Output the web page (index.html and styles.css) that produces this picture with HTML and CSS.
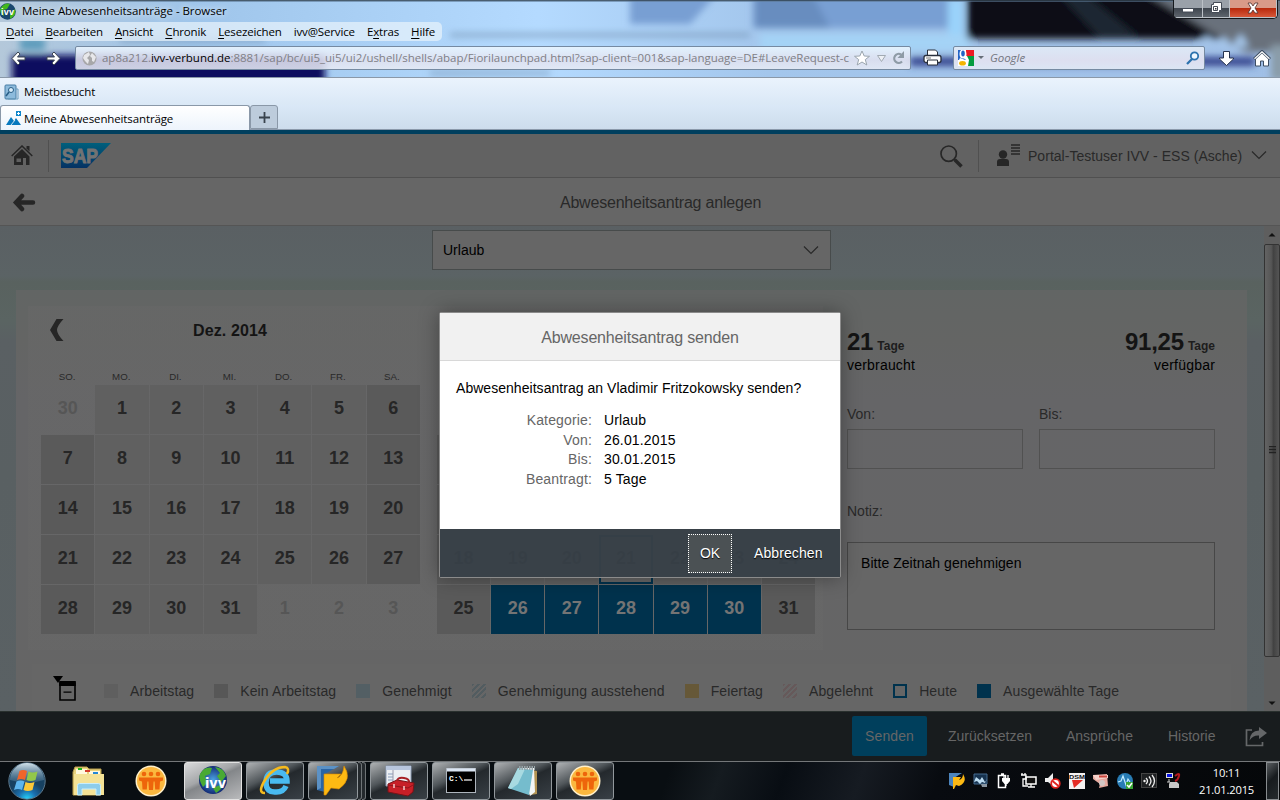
FILE: index.html
```html
<!DOCTYPE html>
<html lang="de">
<head>
<meta charset="utf-8">
<title>Meine Abwesenheitsanträge</title>
<link rel="stylesheet" href="styles.css">
</head>
<body>
<div class="chrome">
  <svg class="glass" width="1280" height="78" viewBox="0 0 1280 78">
    <defs><filter id="soft" x="-10%" y="-30%" width="120%" height="160%"><feGaussianBlur stdDeviation="3.500"/></filter>
    <linearGradient id="sky" x1="0" x2="1"><stop offset="0" stop-color="#b4c8da"/><stop offset=".15" stop-color="#9fc5ea"/><stop offset=".42" stop-color="#b4daff"/><stop offset=".6" stop-color="#a3c6ec"/><stop offset="1" stop-color="#a0bfe6"/></linearGradient></defs>
    <rect width="1280" height="78" fill="url(#sky)"/>
    <g filter="url(#soft)">
      <rect x="12" y="55" width="313" height="40" fill="#08095e"/>
      <rect x="20" y="38" width="25" height="12" fill="#5b9bbb"/>
      <path d="M120 40h145M450 35h300M430 73h120" stroke="#7796b5" stroke-width="3"/>
      <path d="M630-10h90L690 24h-60zM753-10h195v38H753z" fill="#789fd3"/>
      <path d="M755-10h55l20 38h-75z" fill="#688dbf"/>
      <rect x="948" y="0" width="15" height="38" fill="#9ad3fb"/>
      <rect x="760" y="34" width="210" height="17" fill="#a4d3f6"/>
      <path d="M967-12h170l95 51H967z" fill="#080e18"/>
      <path d="M1055-10h25l60 48h-40z" fill="#1f2530"/>
      <path d="M1140-10h150v62h-45z" fill="#69717b"/>
      <rect x="910" y="57" width="345" height="9" fill="#35448e"/>
      <path d="M1200 45l7-11 8 12 9-10 8 10 9-13 8 14z" fill="#a6c8ec"/>
      <rect x="1271" y="45" width="15" height="35" fill="#8a9ca9"/>
    </g>
    <path d="M0 .5h1280" stroke="#31414e" opacity=".8"/><path d="M0 1.5h1280" stroke="#5c7894" opacity=".6"/>
  </svg>
  <div class="titlebar">
    <svg width="18" height="20" viewBox="0 0 18 20"><circle cx="7.500" cy="10.500" r="8.300" fill="#19476e"/><path d="M0 8Q5 1 10 3L7 8 3 9l1 6Q0 13 0 8M10 13l5-5q2 6-5 10z" fill="#43b71e"/><text x="1" y="13.500" textLength="13" class="globe-s">ivv</text></svg>
    <span class="window-title">Meine Abwesenheitsanträge - Browser</span>
    <div class="window-buttons">
      <span class="wb"><svg width="12" height="16"><rect x=".5" y="8.500" width="11" height="3.500" fill="#fff" stroke="#444b56"/></svg></span>
      <span class="wb"><svg width="14" height="16"><path d="M4.500 2.500h8v8h-2v2h-8v-8h2z" fill="#fff" stroke="#444b56"/><path d="M4.500 6.500h4v4h-4z" fill="#fff" stroke="#444b56"/><path d="M6 8h1.500v1.500H6z" fill="#333"/></svg></span>
      <span class="wb close"><svg width="12" height="16"><path d="M1 3h3l2 3 2-3h3L8 8l3 5H8l-2-3-2 3H1l3-5z" fill="#fff" stroke="#50302f" stroke-width=".8"/></svg></span>
    </div>
  </div>
  <div class="menubar">
    <span><u>D</u>atei</span><span><u>B</u>earbeiten</span><span><u>A</u>nsicht</span><span><u>C</u>hronik</span><span><u>L</u>esezeichen</span><span>ivv@Service</span><span>E<u>x</u>tras</span><span><u>H</u>ilfe</span>
  </div>
  <div class="navbar">
    <svg class="nav-back" width="15" height="15"><path d="M7 1L1 7.500 7 14l2-2-2.500-3H14V6H6.500L9 3z" fill="#fff" stroke="#3b4553"/></svg>
    <svg class="nav-fwd" width="15" height="15"><path d="M8 1l6 6.500L8 14l-2-2 2.500-3H1V6h7.500L6 3z" fill="#fff" stroke="#3b4553"/></svg>
    <div class="url">
      <svg width="15" height="15"><circle cx="7.500" cy="7.500" r="7" fill="#a7a7a9"/><path d="M2 4l5-3 1 3-3 3 2 2-1 4-3-3-2-3zM10 2l4 4-2 5-2-1V7L8 5z" fill="#e7e7ea"/></svg>
      <span class="address">ap8a212.<b>ivv-verbund.de</b>:8881/sap/bc/ui5_ui5/ui2/ushell/shells/abap/Fiorilaunchpad.html?sap-client=001&amp;sap-language=DE#LeaveRequest-c</span>
      <svg width="52" height="17" class="url-tools"><path d="M8 1l2.200 5 5.300.3-4.200 3.300 1.500 5.400L8 12l-4.800 3 1.500-5.400L.5 6.300 5.800 6z" fill="#fff" stroke="#9aa5ae"/><path d="M23.500 5.500h8l-4 6z" fill="#edf0f5" stroke="#a1aab3"/><path d="M48 11.500A4.500 4.500 0 1 1 47 4.500" fill="none" stroke="#8e9ba6" stroke-width="2.200"/><path d="M50 1v7h-6.500z" fill="#8e9ba6"/></svg>
    </div>
    <svg class="printer" width="19" height="17"><path d="M4.500 7V1h8l2 2v4" fill="#fff" stroke="#29303d"/><rect x="1" y="6.500" width="17" height="7" rx="2" fill="#fff" stroke="#29303d" stroke-width="1.300"/><path d="M4.500 11h10v5h-10z" fill="#fff" stroke="#29303d"/><path d="M3 9h5" stroke="#777"/></svg>
    <div class="search">
      <svg width="16" height="16"><rect width="16" height="16" fill="#fff"/><path d="M8 0h8v6H8z" fill="#ed1b24"/><path d="M9 6h7v10h-6l1-6z" fill="#049b3f"/><path d="M0 0h3v6l5 4H0z" fill="#2364c6"/><ellipse cx="5" cy="4" rx="3.500" ry="4.500" fill="#fff"/><ellipse cx="5" cy="3.500" rx="1.800" ry="3" fill="#2364c6"/><path d="M2 8l8 3-2 5H0v-4z" fill="#fff"/><ellipse cx="4.500" cy="13.200" rx="3.400" ry="2.300" fill="#f4b400"/></svg>
      <svg width="8" height="16"><path d="M1 6h6L4 9z" fill="#666e78"/></svg><i>Google</i>
      <svg class="lens" width="14" height="14"><circle cx="8.500" cy="5" r="3.700" fill="#eef6ff" stroke="#2c72ae" stroke-width="1.800"/><path d="M6 8L1 13" stroke="#2c72ae" stroke-width="2.300"/></svg>
    </div>
    <svg class="down" width="17" height="17"><path d="M5.500 1.500h6V8h4v1l-7 6.500-7-6.500V8h4z" fill="#fff" stroke="#27344e"/></svg>
    <svg class="homebtn" width="18" height="17"><path d="M2.500 8v8h5v-5h3v5h5V8L9 2z" fill="#fff" stroke="#3d4d63"/><path d="M1 9l8-7.500L17 9" fill="none" stroke="#3d4d63" stroke-width="3"/><path d="M1.500 8.700L9 1.700l7.500 7" fill="none" stroke="#fff" stroke-width="1.200"/></svg>
  </div>
  <div class="bookmarks"><svg width="15" height="16"><rect x="1" y="1" width="11" height="14" rx="1" fill="#8dbbdc" stroke="#467da5"/><path d="M12 5h2v10H4" fill="none" stroke="#6b9dbd"/><circle cx="7" cy="6" r="2.500" fill="#d8edfa" stroke="#285e87"/><path d="M5 8l-3 4" stroke="#285e87" stroke-width="1.500"/></svg><span>Meistbesucht</span></div>
  <div class="tabs"><div class="tab"><svg width="16" height="15"><path d="M0 14l5-8 3 4 2-3 5 7z" fill="#0879be"/><path d="M5 14l4-5" stroke="#fff" stroke-width=".8"/><rect x="10" y="0" width="5" height="5" fill="#0d86cc"/><path d="M12.500 1v3M11 2.500h3" stroke="#fff"/></svg><span>Meine Abwesenheitsanträge</span></div><div class="newtab"><svg width="11" height="11"><path d="M5.500 0v11M0 5.500h11" stroke="#39434d" stroke-width="1.800"/></svg></div></div>
</div>

<div class="app">
  <header class="shell">
    <svg class="s-home" width="22" height="21"><path d="M.7 11L11 1 21.300 11" fill="none" stroke="#262626" stroke-width="1.500"/><path d="M15.500 1h3v5.500l-3-3z" fill="#262626"/><path d="M11 4l7.500 7.500V20H15v-7h-3v7H3v-8.500z" fill="#262626"/><path d="M5.500 13.500H10v3.500H5.500z" fill="#606060"/></svg>
    <i class="vline"></i>
    <svg class="sap" width="50" height="25"><defs><linearGradient id="sap" x2="0" y2="1"><stop stop-color="#005f7c"/><stop offset="1" stop-color="#053263"/></linearGradient></defs><path d="M0 0h50L26 25H0z" fill="url(#sap)"/><text x="1" y="19.500" textLength="36" lengthAdjust="spacingAndGlyphs" class="saptext">SAP</text></svg>
    <span class="grow"></span>
    <svg class="s-search" width="23" height="23"><circle cx="8.700" cy="8.700" r="7.700" fill="none" stroke="#272727" stroke-width="1.700"/><path d="M14 14l1.500 1.500" stroke="#272727" stroke-width="2"/><path d="M15 15l6.500 6.500" stroke="#272727" stroke-width="3.600"/></svg>
    <i class="vline second"></i>
    <svg class="person" width="23" height="23"><circle cx="6" cy="10.500" r="4.200" fill="#262626"/><path d="M0 22v-4q0-3 3-3h6q3 0 3 3v4z" fill="#262626"/><path d="M14 1h9M14 4h9M14 7h9M14 10h9" stroke="#262626" stroke-width="1.600"/></svg>
    <span class="user">Portal-Testuser IVV - ESS (Asche)</span>
    <svg class="chev" width="16" height="9"><path d="M1 .5l7 7 7-7" fill="none" stroke="#292929" stroke-width="1.200"/></svg>
  </header>
  <div class="pagehead"><svg width="24" height="19"><path d="M10 3L4 9.500 10 16M4 9.500h17" fill="none" stroke="#262626" stroke-width="4.500" stroke-linecap="round"/></svg><h1>Abwesenheitsantrag anlegen</h1></div>
  <div class="content">
    <main>
      <div class="select"><span>Urlaub</span><svg width="16" height="9"><path d="M1 .5l7 7 7-7" fill="none" stroke="#292929" stroke-width="1.200"/></svg></div>
      <section class="card">
        <div class="row">
          <div class="months">
            <div class="month">
              <div class="mhead"><svg width="14" height="22"><path d="M6.500 0H13.500Q7 7 7 11t6.500 11H6.500L0 11z" fill="#262626"/></svg><h2>Dez. 2014</h2></div>
              <div class="wd"><span>SO.</span><span>MO.</span><span>DI.</span><span>MI.</span><span>DO.</span><span>FR.</span><span>SA.</span></div>
              <div class="days">
                <b class="o">30</b><b>1</b><b>2</b><b>3</b><b>4</b><b>5</b><b class="w">6</b>
                <b class="w">7</b><b>8</b><b>9</b><b>10</b><b>11</b><b>12</b><b class="w">13</b>
                <b class="w">14</b><b>15</b><b>16</b><b>17</b><b>18</b><b>19</b><b class="w">20</b>
                <b class="w">21</b><b>22</b><b>23</b><b>24</b><b>25</b><b>26</b><b class="w">27</b>
                <b class="w">28</b><b>29</b><b>30</b><b>31</b><b class="o">1</b><b class="o">2</b><b class="o">3</b>
              </div>
            </div>
            <div class="month next">
              <div class="days">
                <b class="w"></b><b></b><b></b><b></b><b></b><b></b><b class="w"></b>
                <b class="w"></b><b></b><b></b><b></b><b></b><b></b><b class="w"></b>
                <b class="w">18</b><b>19</b><b>20</b><b class="today">21</b><b>22</b><b>23</b><b class="w">24</b>
                <b class="w">25</b><b class="s">26</b><b class="s">27</b><b class="s">28</b><b class="s">29</b><b class="s">30</b><b class="w">31</b>
              </div>
            </div>
          </div>
          <div class="side">
            <div class="totals"><div><p><strong>21</strong> <b>Tage</b></p><p>verbraucht</p></div><div class="right"><p><strong>91,25</strong> <b>Tage</b></p><p>verfügbar</p></div></div>
            <div class="dates"><div><label>Von:</label><div class="field"></div></div><div><label>Bis:</label><div class="field"></div></div></div>
            <label class="notiz">Notiz:</label>
            <div class="note">Bitte Zeitnah genehmigen</div>
          </div>
        </div>
        <div class="legend">
          <svg class="lg" width="24" height="26"><path d="M0 0h10L5 7z"/><path d="M7 7h15v17H7z" fill="none" stroke="#000" stroke-width="1.600"/><path d="M6.200 5h16.600v5H6.200zM10.500 15.500h8v1.300h-8z"/></svg>
          <span><i class="work"></i>Arbeitstag</span><span><i class="off"></i>Kein Arbeitstag</span><span><i class="approved"></i>Genehmigt</span><span><i class="hatch"></i>Genehmigung ausstehend</span><span><i class="holiday"></i>Feiertag</span><span><i class="hatch red"></i>Abgelehnt</span><span><i class="ring"></i>Heute</span><span><i class="chosen"></i>Ausgewählte Tage</span>
        </div>
      </section>
    </main>
    <div class="scroll"><svg width="16" height="17"><path d="M4.500 10.500h7L8 7z" fill="#111"/></svg><div class="thumb"><svg width="7" height="9"><path d="M0 .5h7M0 3.500h7M0 6.500h7" stroke="#222" stroke-width="1.300"/></svg></div><svg width="16" height="17"><path d="M4.500 6.500h7L8 10z" fill="#111"/></svg></div>
  </div>
  <footer class="actions"><span class="primary">Senden</span><span class="a2">Zurücksetzen</span><span class="a3">Ansprüche</span><span class="a4">Historie</span><svg width="23" height="22"><path d="M7 4H1.500v15.500h16V16" fill="none" stroke="#656769" stroke-width="1.700"/><path d="M14 1l8 6-8 6V9.500q-6-.5-9.500 5Q5 5 14 4.500z" fill="#656769"/></svg></footer>
</div>

<div class="dialog">
  <div class="dtitle">Abwesenheitsantrag senden</div>
  <div class="dbody"><p>Abwesenheitsantrag an Vladimir Fritzokowsky senden?</p>
    <dl><dt>Kategorie:</dt><dd>Urlaub</dd><dt>Von:</dt><dd>26.01.2015</dd><dt>Bis:</dt><dd>30.01.2015</dd><dt>Beantragt:</dt><dd>5 Tage</dd></dl></div>
  <div class="dfoot"><span class="ok">OK</span><span class="cancel">Abbrechen</span></div>
</div>

<div class="taskbar">
  <svg class="start" width="38" height="38"><defs><radialGradient id="orb" cx=".5" cy="1"><stop stop-color="#26d8ff"/><stop offset=".5" stop-color="#1a6fae"/><stop offset="1" stop-color="#174161"/></radialGradient><linearGradient id="shine" x2="0" y2="1"><stop stop-color="#d3e2ea"/><stop offset="1" stop-color="#5d87a4" stop-opacity=".35"/></linearGradient></defs><circle cx="19" cy="19" r="18.200" fill="url(#orb)" stroke="#5c788c"/><path d="M2 18A17 17 0 0 1 36 18Q19 23 2 18" fill="url(#shine)"/><path d="M11.500 9q3.500-2 7.500 0L17 18q-4-2-8 0z" fill="#f0652b"/><path d="M20.500 9.500q4 2 9 0l-2 8.500q-5 2-9 0z" fill="#93c84a"/><path d="M8.500 19.500q4-2 8 0L14 28q-4-2-8 0z" fill="#5db5ee"/><path d="M17.500 20q4 2 9 0l-2 8q-5 2-9 0z" fill="#fbc838"/></svg>
  <svg class="folder" width="34" height="32"><path d="M3 2h12l2 2h12v26H1V7z" fill="#e9d27c" stroke="#b69c4c"/><path d="M4 4h11v6H4z" fill="#fff8dc"/><path d="M17 6h11v5H17z" fill="#fff8dc"/><path d="M2 9h30v21H2z" fill="#f4e296"/><path d="M6 4h4" stroke="#1eb41b" stroke-width="2"/><path d="M13 6h5" stroke="#d53d2c" stroke-width="2"/><path d="M21 8h5" stroke="#2488d8" stroke-width="2"/><path d="M5.500 30V20.500q0-2 2-2h19q2 0 2 2V30h-4.500v-6H10v6z" fill="#8dcdeb" stroke="#c8edfb"/></svg>
  <svg class="people" width="32" height="32"><use href="#crew"/></svg>
  <div class="tbtn active"><svg width="32" height="32"><defs><radialGradient id="gl"><stop stop-color="#4ca4e4"/><stop offset="1" stop-color="#122b76"/></radialGradient></defs><circle cx="16" cy="15" r="14" fill="url(#gl)"/><path d="M3 9Q8 1 15 3l-2 6-5 2 2 7-4 4Q1 14 3 9M18 2q9 1 11 9l-5 6-4-6 3-3zM16 23l7-3q5 2-4 8z" fill="#49aa34"/><text x="8" y="23" textLength="21" lengthAdjust="spacingAndGlyphs" class="globe-l">ivv</text></svg></div>
  <div class="tbtn"><svg width="32" height="32"><path d="M11 16h17q0-9-10.500-9T7 17.500 17.500 27q7 0 9.500-6" fill="none" stroke="#49baf0" stroke-width="5.500"/><path d="M6 28Q-2 28 6 15T26 2q5 1 2 7" fill="none" stroke="#f6ba1d" stroke-width="2.500"/></svg></div>
  <div class="tbtn stacked"><svg width="32" height="32"><path d="M0 1h22L8 9v18l-8-2z" fill="#2b65a5"/><path d="M0 1h22l-5 3H4v19l-4 2z" fill="#5b91c5"/><path d="M7 9h17l-4 4q6-2 7-12 9 13-5 23l-8-1-5 7H7z" fill="#fdb913" stroke="#d88800" stroke-width=".6"/></svg></div>
  <i class="stack"></i><i class="stack last"></i>
  <div class="tbtn"><svg width="32" height="32"><path d="M3 1h25v20H3z" fill="#eceff3" stroke="#8999b1"/><path d="M3 1h25v4H3z" fill="#b8c6dd"/><path d="M5 9h5M5 12h5M5 15h5" stroke="#879cbb"/><path d="M10 5v15" stroke="#99a"/><path d="M5 19l9-4 17 3-1 9-5 4-20-4z" fill="#c71f27" stroke="#771318"/><path d="M14 16q1-4 7-3t5 5" fill="none" stroke="#a71f24" stroke-width="2"/><path d="M5 20l20 3 5-3" fill="none" stroke="#8f151b"/><path d="M11 19v4M21 21v4" stroke="#f4c9c8" stroke-width="1.500"/></svg></div>
  <div class="tbtn"><svg width="32" height="32"><rect x="1.500" y="3.500" width="29" height="24" fill="#000" stroke="#aeb5bd"/><path d="M2 5h28" stroke="#dbe5f2" stroke-width="3"/><text x="4" y="16" class="cmd">C:\</text><path d="M19 15h8" stroke="#fff" stroke-width="1.200"/></svg></div>
  <div class="tbtn"><svg width="32" height="32"><path d="M13 3l17 3v23l-7 1z" fill="#b39453"/><path d="M12 3h15l1 24-5 4z" fill="#f3f6f6"/><path d="M11 3l15 2-4 25L1 23z" fill="#75bccd"/><path d="M11 3l7 1-7 15-7 5-3-1z" fill="#a8dae1"/><path d="M12 3h16" stroke="#98a4a8" stroke-width="4" stroke-dasharray="1.500 1"/></svg></div>
  <div class="tbtn"><svg width="32" height="32"><g id="crew"><circle cx="16" cy="16" r="15.500" fill="#fff0cb"/><circle cx="16" cy="16" r="14" fill="#fbb83f"/><g fill="#ee650b"><circle cx="9" cy="9" r="2.300"/><circle cx="16" cy="9" r="2.300"/><circle cx="23" cy="9" r="2.300"/><path d="M4 12.500h24v3l-3 1-.5 8h-4.300l-.6-8h-1l-.6 8.500h-4l-.6-8.500h-1l-.6 8H7.500l-.5-8-3-1z"/></g></g></svg></div>
  <span class="grow"></span>
  <div class="tray">
    <svg width="16" height="16"><path d="M0 0h13L5 5v9l-5-2z" fill="#4c84bd"/><path d="M4 4h8l-2 3q4-1 4-6 5 8-4 12L7 12l-2 4H4z" fill="#fdb913"/></svg>
    <svg width="16" height="16"><path d="M1 1h13v10H1z" fill="#16324f" stroke="#456a90"/><path d="M3 4l4 3 2-3 3 5 2-3-2 4-3-1-2 2-3-3-3 1z" fill="#bcdcf1"/><path d="M8 11h6v3H9z" fill="#8996a2"/></svg>
    <svg width="16" height="16"><path d="M1.500 2.500h7v12h-7zM4 1h3" fill="none" stroke="#fff" stroke-width="1.500"/><path d="M5 5h8v3l-2.500 3h-3L5 8z" fill="#fff"/><path d="M7 2v4M11 2v4M9 10v3" fill="none" stroke="#fff" stroke-width="1.300"/></svg>
    <svg width="16" height="16"><rect x="5" y="4" width="10" height="7" fill="#111" stroke="#fff" stroke-width="1.500"/><path d="M0 2h5v4H2v7h5M7 14h7M10 11v3M1 0v2M4 0v2" stroke="#fff" fill="none" stroke-width="1.300"/></svg>
    <svg width="16" height="16"><path d="M0 5h3l5-5v13L3 9H0z" fill="#eee"/><circle cx="10.500" cy="10.500" r="4.300" fill="#fff" stroke="#e1231e" stroke-width="1.800"/><path d="M7.500 8l6 5" stroke="#e1231e" stroke-width="1.800"/></svg>
    <svg width="16" height="16"><rect width="16" height="16" fill="#f5f2f2"/><text x="0" y="5.500" textLength="16" lengthAdjust="spacingAndGlyphs" class="dsm">DSM</text><path d="M3 7h11L5 15z" fill="#e52c25"/></svg>
    <svg width="16" height="16"><path d="M0 2l14-1 1 12-9 2 1-4-7-5z" fill="#e7aaa0"/><path d="M0 2h15v3L3 7z" fill="#f6d2cc"/><path d="M6 3.500h8" stroke="#cd463d" stroke-width="2"/><circle cx="9" cy="10" r="3" fill="#d3c7c5"/></svg>
    <svg width="16" height="16"><circle cx="8" cy="8" r="8" fill="#287cb5"/><path d="M1 9l3-1 2-5 3 9 2-6 2 3" fill="none" stroke="#c3edff" stroke-width="1.200"/><path d="M9 9h7v7H9z" fill="#38a534"/><path d="M10 12l2 2 3-4" fill="none" stroke="#fff" stroke-width="1.500"/></svg>
    <svg width="16" height="16"><rect x=".5" y=".5" width="15" height="14" fill="#1e2022" stroke="#444"/><circle cx="3.500" cy="8" r="1.200" fill="#eee"/><path d="M5 5q3 3 0 6M8 3.500q4 4.500 0 9M11 2q5 6 0 12" fill="none" stroke="#eee" stroke-width="1.300"/></svg>
    <svg width="16" height="16"><rect x="1.500" y=".5" width="6" height="4" fill="#0712e2" stroke="#ddd"/><path d="M10 3q5-4 4 0t-4 5" fill="none" stroke="#b11a20" stroke-width="2"/><path d="M4 6v3M2 9h3" stroke="#ccc"/><path d="M5 9h7l2 2v4H4v-4z" fill="#c8c8c8"/></svg>
  </div>
  <div class="clock"><span>10:11</span><span>21.01.2015</span></div>
  <div class="peek"></div>
</div>
</body>
</html>
```
FILE: styles.css
```css
* { box-sizing: border-box; }
body { margin: 0; width: 1280px; height: 800px; overflow: hidden; position: relative; display: flex; flex-direction: column; font: 14px/20px "Liberation Sans", Arial, sans-serif; background: #666; }
svg { display: block; flex: none; }
p, h1, h2, dl, dd { margin: 0; }
.grow { flex: 1; }

/* browser frame */
.chrome { position: relative; height: 130px; flex: none; font: 11.5px/16px "Open Sans", "Noto Sans", sans-serif; letter-spacing: -.05px; color: #000; }
.glass { position: absolute; left: 0; top: 0; }
.titlebar, .menubar, .navbar, .bookmarks, .tabs { position: relative; display: flex; }
.titlebar { height: 22px; align-items: center; }
.window-title { margin-left: 4px; white-space: nowrap; text-shadow: 0 0 6px #fff; }
.window-buttons { display: flex; margin: 0 2px 0 auto; align-self: flex-start; border: 1px solid #15191d; border-top: 0; border-radius: 0 0 5px 5px; overflow: hidden; height: 19px; box-shadow: inset 0 0 0 1px #bbc3cb; }
.wb { width: 27px; display: flex; justify-content: center; background: linear-gradient(#9aa1a9 45%, #3f464f 50%, #5d646c); border: 1px solid #bbc1c7; border-top: 0; border-left: 0; }
.wb:first-child { width: 29px; }
.wb.close { width: 47px; background: linear-gradient(#d99a88 45%, #b92a0d 50%, #d6583a); }
.menubar { height: 19px; align-self: flex-start; width: 442px; background: rgba(231,242,251,.72); border-radius: 0 5px 5px 0; padding-left: 6px; gap: 12px; line-height: 19px; letter-spacing: -.15px; white-space: nowrap; }
.menubar u { text-underline-offset: 2px; }
.navbar { height: 37px; padding-top: 5px; border-bottom: 1px solid #8a98a8; }
.nav-back { margin: 5px 0 0 11px; }
.nav-fwd { margin: 5px 0 0 20px; }
.url { margin-left: 14px; width: 836px; height: 24px; border: 1px solid #758aa2; border-radius: 2px; background: linear-gradient(rgba(234,246,255,.88), rgba(224,225,239,.88) 60%, rgba(231,235,245,.88)); display: flex; align-items: center; padding-left: 6px; }
.address { margin-left: 5px; width: 749px; color: #808086; letter-spacing: -.02px; white-space: nowrap; overflow: hidden; }
.address b { font-weight: 400; color: #000; }
.url-tools { margin-left: 3px; }
.printer { margin: 3px 0 0 12px; }
.search { margin-left: 11px; width: 252px; height: 24px; border: 1px solid #758aa2; border-radius: 2px; background: linear-gradient(#dbe8f6, #dddff0 60%, #dbe5f4); display: flex; align-items: center; padding: 0 4px; color: #737780; gap: 3px; }
.search i { margin-left: 2px; }
.lens { margin-left: auto; }
.down { margin: 4px 0 0 13px; }
.homebtn { margin: 4px 0 0 18px; }
.bookmarks { height: 27px; background: linear-gradient(#eaf3fd, #dae8f6); align-items: center; padding-left: 4px; gap: 5px; }
.tabs { height: 25px; background: linear-gradient(#dae8f7, #cddcec); border-bottom: 1px solid #8c9aac; letter-spacing: -.12px; }
.tab { width: 250px; height: 25px; border: 1px solid #8a98a8; border-bottom: 0; border-radius: 3px 3px 0 0; background: linear-gradient(#fff, #edf4fc); display: flex; align-items: center; padding: 2px 0 0 5px; gap: 2px; }
.tab svg { margin-top: -2px; }
.newtab { width: 28px; border: 1px solid #8a98a8; border-radius: 3px 3px 0 0; background: #bdccdc; display: flex; align-items: center; justify-content: center; }
.globe-s { font: bold 9px "Liberation Sans", sans-serif; fill: #fff; }

/* application behind the modal layer */
.app { height: 631px; flex: none; display: flex; flex-direction: column; border-top: 4px solid #003f5e; color: #292929; }
.shell { height: 44px; flex: none; display: flex; align-items: center; background: #626262; border-bottom: 1px solid #505050; }
.s-home { margin-left: 11px; }
.vline { width: 1px; height: 32px; background: #505050; margin-left: 15px; }
.sap { margin-left: 12px; }
.saptext { font: bold 20px "Liberation Sans", Arial, sans-serif; fill: #737373; stroke: #737373; stroke-width: 1px; }
.s-search { margin-top: 1px; }
.vline.second { margin-left: 15px; }
.person { margin-left: 18px; }
.user { margin-left: 8px; letter-spacing: .03px; width: 215px; white-space: nowrap; }
.chev { margin: 0 13px 0 8px; }
.pagehead { height: 48px; flex: none; display: flex; align-items: center; background: #666; border-bottom: 1px solid #555; padding: 1px 0 0 12px; }
.pagehead h1 { flex: 1; padding: 2px 0 0 5px; font-size: 16px; font-weight: 400; letter-spacing: -.2px; text-align: center; }
.content { height: 485px; flex: none; display: flex; overflow: hidden; background: linear-gradient(#5a6063, #5b6365 50px, #59625f 56px, #5a6462 95px, #5a6063 115px, #596062 250px, #5a6164); }
main { width: 1264px; flex: none; display: flex; flex-direction: column; align-items: center; }
.select { width: 399px; height: 40px; flex: none; margin: 4px 1px 0 0; border: 1px solid #474b4b; background: #666; color: #000; display: flex; align-items: center; justify-content: space-between; padding: 0 11px 0 10px; }
.card { align-self: stretch; margin: 20px 17px 0 16px; height: 421px; flex: none; background: linear-gradient(#626564, #646564 50px, #656567 110px, #656565); }
.row { display: flex; height: 374px; padding-top: 16px; }
.months { display: flex; gap: 17px; padding-left: 25px; width: 807px; height: 344px; background: linear-gradient(90deg, transparent 12px, rgba(104,104,104,.55) 12px); }
.month { width: 379px; flex: none; }
.mhead { display: flex; align-items: center; height: 49px; padding-left: 9px; }
.mhead svg { margin-top: -2px; }
.mhead h2 { flex: 1; margin-left: -24px; text-align: center; font-size: 16px; letter-spacing: .1px; color: #141414; }
.wd { display: grid; grid-template-columns: repeat(7, 1fr); font-size: 9.700px; line-height: 12px; text-align: center; height: 30px; align-items: center; }
.wd span { padding: 13px 2px 0 0; }
.days { display: grid; grid-template-columns: repeat(7, 1fr); gap: 1px; grid-auto-rows: 49px; }
.days b { display: flex; align-items: center; justify-content: center; font-size: 18px; padding-bottom: 3px; background: #606060; color: #262626; }
.days .w { background: #5a5a5a; }
.days .o { background: transparent; color: #565656; }
.days .s { background: #00324d; color: #747474; }
.days .today { border: 2px solid #00324d; background: #666; }
.next { padding-top: 129px; }
.next .days { margin-right: 1px; }
.side { width: 368px; margin-left: 24px; }
.totals { display: flex; justify-content: space-between; margin-top: 22px; color: #000; line-height: 18px; letter-spacing: .2px; }
.totals strong { font-size: 24px; line-height: 28px; letter-spacing: -.25px; color: #141414; }
.totals b { font-size: 12px; letter-spacing: 0; color: #1d1d1d; }
.totals .right { text-align: right; }
.dates { display: flex; gap: 16px; margin-top: 30px; }
.dates > div { flex: 1; }
label { display: block; }
.field { height: 40px; margin-top: 5px; border: 1px solid #515151; }
.notiz { margin-top: 32px; }
.note { height: 88px; margin-top: 21px; border: 1px solid #474747; background: #666; padding: 10px 13px; color: #000; letter-spacing: .04px; }
.legend { display: flex; height: 47px; margin: 0 16px; padding-left: 21px; align-items: center; background: #666; white-space: nowrap; letter-spacing: .12px; }
.lg { margin: 3px 27px 0 0; }
.legend span { display: flex; align-items: center; margin-right: 20px; padding-top: 7px; }
.legend i { width: 14px; height: 14px; margin-right: 12px; }
.legend .work { background: #5f5f5f; }
.legend .off { background: #575757; }
.legend .approved { background: #535f64; }
.legend .holiday { background: #665838; }
.legend .chosen { background: #00324d; }
.legend .hatch { background: repeating-linear-gradient(135deg, #525c60 0 2px, #666 2px 4px); }
.legend .red { background: repeating-linear-gradient(135deg, #66595a 0 2px, #666 2px 4px); }
.legend .ring { border: 2px solid #00324d; }
.scroll { width: 16px; background: #5e5e5e; display: flex; flex-direction: column; }
.thumb { flex: none; margin: 1px 0 38px; height: 413px; border: 1px solid #333; border-radius: 2px; background: linear-gradient(90deg, #636363, #565656 45%, #424242 60%, #555); display: flex; align-items: center; justify-content: center; }
.actions { height: 50px; flex: none; display: flex; align-items: center; background: #181c1e; border-top: 1px solid #29302e; color: #666; padding: 0 12px 2px 852px; white-space: nowrap; }
.primary { width: 75px; height: 40px; line-height: 40px; text-align: center; background: #003f5c; border-radius: 2px; letter-spacing: .1px; }
.a2 { margin-left: 21px; width: 84px; }
.a3 { margin-left: 34px; width: 68px; }
.a4 { margin-left: 34px; width: 48px; }
.actions svg { margin-left: auto; margin-top: 2px; }

/* confirmation dialog */
.dialog { position: absolute; left: 439px; top: 312px; width: 402px; height: 266px; border: 1px solid #8b8b8b; border-radius: 2px; box-shadow: 0 0 20px rgba(0,0,0,.35); display: flex; flex-direction: column; }
.dtitle { height: 48px; background: #f1f1f1; border-bottom: 1px solid #d8d8d8; text-align: center; font-size: 16px; letter-spacing: -.18px; line-height: 50px; color: #666; }
.dbody { height: 168px; background: #fff; padding: 17px 16px 0; color: #000; letter-spacing: .04px; }
.dbody dl { display: grid; grid-template-columns: 136px 1fr; column-gap: 12px; margin-top: 13px; line-height: 19.600px; letter-spacing: .15px; }
.dbody dt { text-align: right; color: #666; }
.dfoot { height: 48px; display: flex; align-items: center; background: rgba(55,64,71,.955); color: #fff; padding-left: 248px; text-shadow: 0 1px 1px #000; }
.ok { width: 44px; height: 39px; line-height: 37px; text-align: center; border: 1px dotted #fff; background: #4b5154; }
.cancel { margin-left: 22px; letter-spacing: .1px; }

/* desktop taskbar */
.taskbar { height: 39px; flex: none; display: flex; align-items: center; background: linear-gradient(110deg, #090e12 0 52%, #151b20 56%, #080d13 61%, #161b22 67%, #080b10 73%, #050709); border-top: 1px solid #747779; }
.start { margin-left: 8px; }
.folder { margin-left: 26px; }
.people { margin-left: 29px; }
.tbtn { width: 58px; height: 38px; margin-left: 4px; flex: none; border: 1px solid #92989c; border-radius: 3px; display: flex; justify-content: center; align-items: center; background: linear-gradient(155deg, #aeb1b3, #50565a 38%, #24292d 50%, #394046); }
.people + .tbtn { margin-left: 17px; }
.tbtn.active { background: linear-gradient(155deg, #d9dadb, #a4a6a8 40%, #838689 48%, #b9babc); border-color: #e2e2e2; }
.stacked { width: 50px; }
.stack { width: 4px; height: 38px; border: 1px solid #6e7376; border-left: 0; background: #24292d; border-radius: 0 3px 3px 0; }
.globe-l { font: bold 14px "DejaVu Sans", sans-serif; fill: #fff; }
.cmd { font: bold 8px "Liberation Mono", monospace; fill: #fff; }
.dsm { font: bold 6px "Liberation Sans", sans-serif; fill: #111; }
.tray { display: flex; gap: 8px; margin-right: -1px; }
.clock { margin-left: 19px; width: 55px; display: flex; flex-direction: column; align-items: center; color: #fff; font: 11.200px/17px "Open Sans", "Noto Sans", sans-serif; letter-spacing: -.2px; white-space: nowrap; }
.peek { width: 13px; height: 38px; margin: 0 1px 0 12px; border: 1px solid #888c8f; background: linear-gradient(135deg, #595d60, #171b1e 45%, #252a2d); }
```
